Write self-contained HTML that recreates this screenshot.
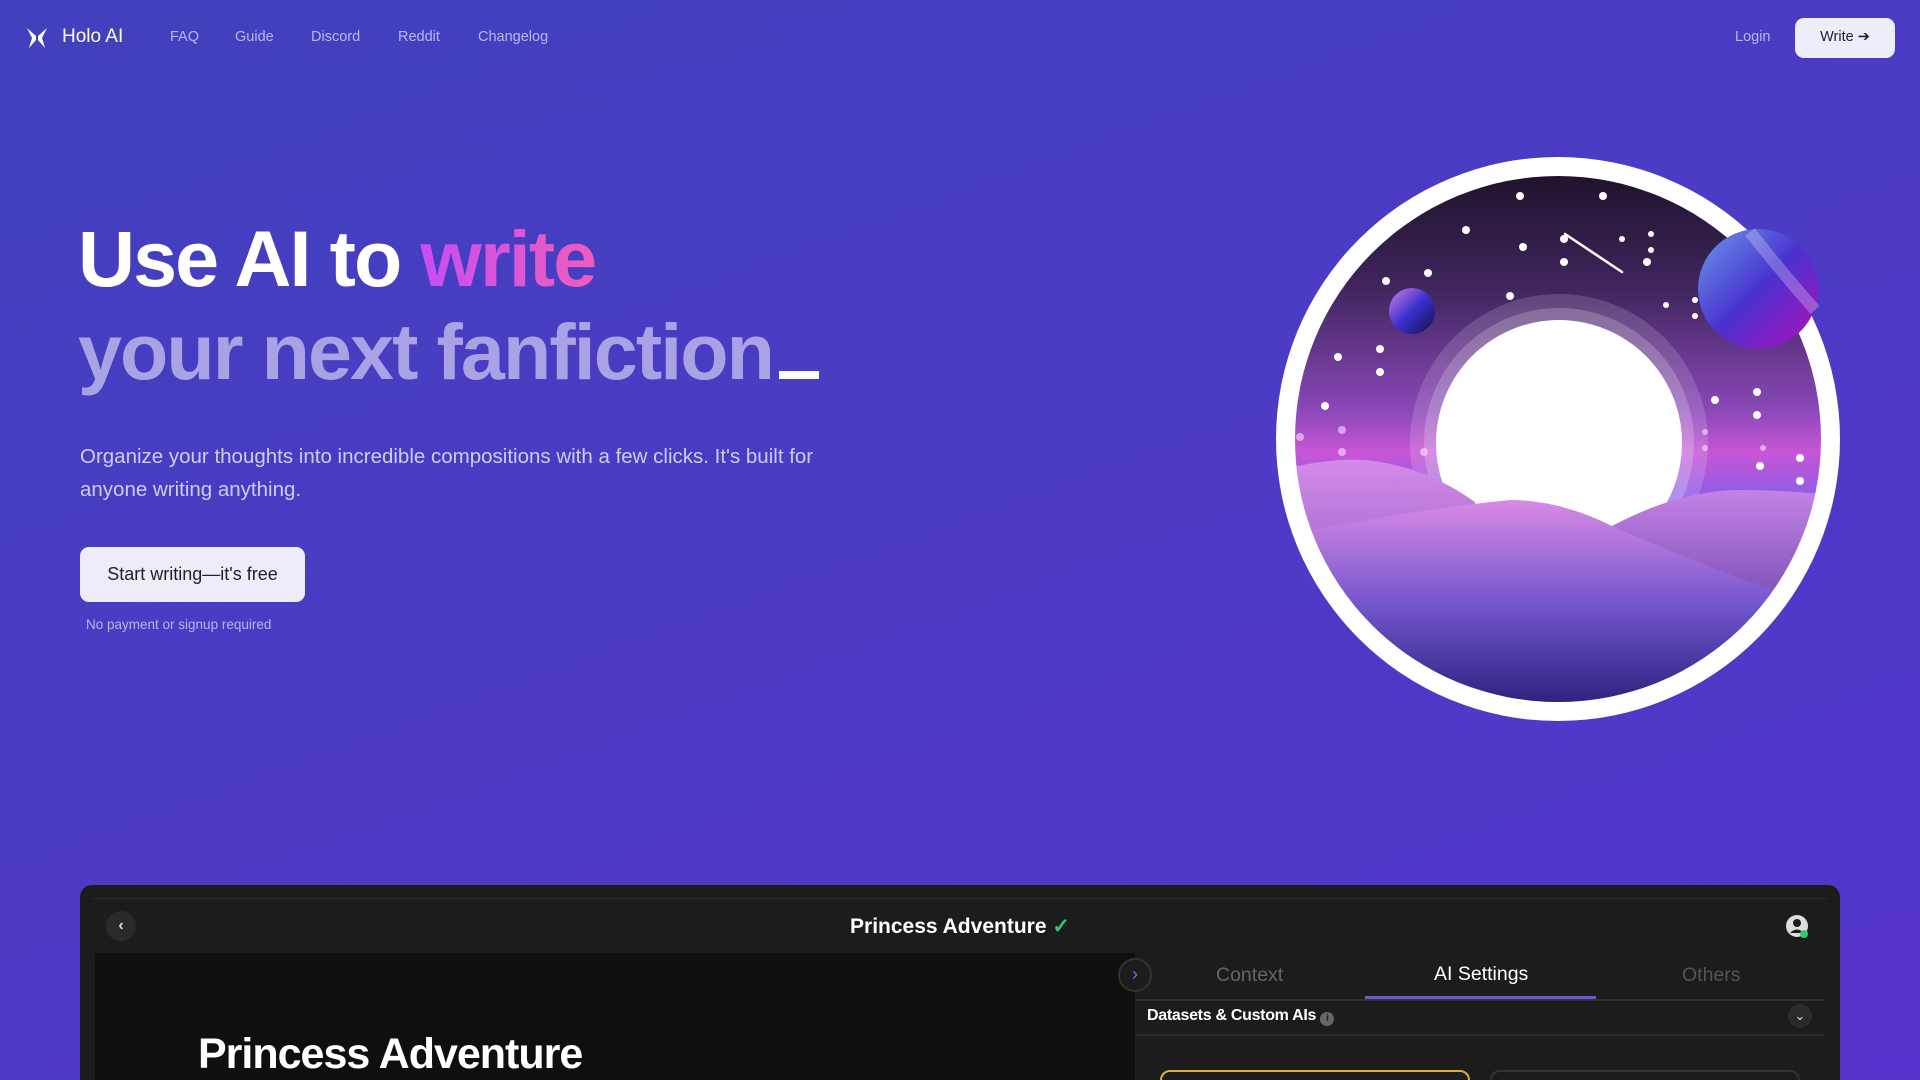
<!DOCTYPE html>
<html style="overflow:hidden;width:1920px;height:1080px"><head><meta charset="utf-8">
<style>
*{margin:0;padding:0;box-sizing:border-box}
body{width:1920px;height:1080px;overflow:hidden;font-family:"Liberation Sans",sans-serif;
background:linear-gradient(160deg,#4240bd 0%,#4a3cc4 45%,#5633cc 100%);position:relative}
.abs{position:absolute}
.nav a{position:absolute;top:29px;font-size:14.5px;color:#b9b8f2;text-decoration:none}
h1{position:absolute;left:78px;top:212px;font-size:79px;line-height:93px;font-weight:700;letter-spacing:-1.9px;color:#fff}
.grad{background:linear-gradient(90deg,#c64ef2,#ef5cbc);-webkit-background-clip:text;background-clip:text;color:transparent}
.l2{color:#a9a3e6}
</style></head><body>
<svg class="abs" style="left:25px;top:26px" width="24" height="24" viewBox="0 0 24 24"><path d="M2 2 L11 10 L11 14 L4 22 L7 12 Z M22 2 L13 10 L13 14 L20 22 L17 12 Z" fill="#fff"/></svg>
<div class="abs" style="left:62px;top:26px;font-size:19px;color:#fff">Holo AI</div>
<div class="nav"><a style="left:170px">FAQ</a><a style="left:235px">Guide</a><a style="left:311px">Discord</a><a style="left:398px">Reddit</a><a style="left:478px">Changelog</a><a style="left:1735px">Login</a></div>
<div class="abs" style="left:1795px;top:18px;width:100px;height:40px;border-radius:9px;background:#eceefb;color:#222;font-size:14.5px;text-align:center;line-height:38px">Write ➔</div>

<h1>Use AI to <span class="grad">write</span><br><span class="l2">your next fanfiction</span><span style="display:inline-block;width:40px;height:8px;background:#fff;margin-left:6px;vertical-align:baseline"></span></h1>
<div class="abs" style="left:80px;top:440px;width:800px;font-size:20.5px;line-height:33px;color:#cfcdf2">Organize your thoughts into incredible compositions with a few clicks. It's built for anyone writing anything.</div>
<div class="abs" style="left:80px;top:547px;width:225px;height:55px;border-radius:9px;background:#eeecf8;color:#222;font-size:18px;text-align:center;line-height:55px">Start writing—it's free</div>
<div class="abs" style="left:86px;top:617px;font-size:13.5px;color:#b9b6e6">No payment or signup required</div>

<svg class="abs" style="left:1260px;top:140px" width="600" height="600" viewBox="0 0 600 600">
<defs>
<linearGradient id="sky" x1="0" y1="0" x2="0" y2="1">
<stop offset="0" stop-color="#140d1c"/><stop offset=".25" stop-color="#40265e"/><stop offset=".45" stop-color="#8a48b8"/><stop offset=".52" stop-color="#c756d6"/><stop offset=".6" stop-color="#8a5ee8"/><stop offset=".7" stop-color="#68a8f0"/><stop offset="1" stop-color="#60c0f0"/></linearGradient>
<linearGradient id="h1" x1="0" y1="0" x2="0" y2="1"><stop offset="0" stop-color="#d68ae8"/><stop offset="1" stop-color="#4a3aa8"/></linearGradient>
<linearGradient id="h2" x1="0" y1="0" x2="0" y2="1"><stop offset="0" stop-color="#d98ae6"/><stop offset=".45" stop-color="#7054cc"/><stop offset="1" stop-color="#160e60"/></linearGradient>
<linearGradient id="h3" x1="0" y1="0" x2="0" y2="1"><stop offset="0" stop-color="#c582e6"/><stop offset="1" stop-color="#20167a"/></linearGradient>
<linearGradient id="p1" x1="0" y1="0" x2="1" y2="1"><stop offset="0" stop-color="#6a9ae8"/><stop offset=".5" stop-color="#4a32d0"/><stop offset="1" stop-color="#b010b8"/></linearGradient>
<linearGradient id="p2" x1="0" y1="0" x2="1" y2="1"><stop offset="0" stop-color="#d080e0"/><stop offset=".5" stop-color="#3a30d0"/><stop offset="1" stop-color="#141040"/></linearGradient>
<clipPath id="c"><circle cx="298" cy="299" r="263"/></clipPath>
</defs>
<circle cx="298" cy="299" r="282" fill="#fff"/>
<g clip-path="url(#c)">
<rect width="600" height="600" fill="url(#sky)"/>
<g fill="#fff">
<circle cx="260" cy="56" r="4"/><circle cx="343" cy="56" r="4"/><circle cx="206" cy="90" r="4"/><circle cx="263" cy="107" r="4"/><circle cx="304" cy="99" r="4"/><circle cx="304" cy="122" r="4"/><circle cx="362" cy="99" r="3"/><circle cx="391" cy="94" r="3"/><circle cx="391" cy="110" r="3"/><circle cx="387" cy="122" r="4"/><circle cx="126" cy="141" r="4"/><circle cx="168" cy="133" r="4"/><circle cx="250" cy="156" r="4"/><circle cx="406" cy="165" r="3"/><circle cx="435" cy="160" r="3"/><circle cx="435" cy="176" r="3"/><circle cx="78" cy="217" r="4"/><circle cx="120" cy="209" r="4"/><circle cx="120" cy="232" r="4"/><circle cx="65" cy="266" r="4"/><circle cx="455" cy="260" r="4"/><circle cx="497" cy="252" r="4"/><circle cx="497" cy="275" r="4"/><circle cx="540" cy="318" r="4"/><circle cx="500" cy="326" r="4"/><circle cx="540" cy="341" r="4"/>
<g opacity=".5"><circle cx="82" cy="290" r="4"/><circle cx="82" cy="312" r="4"/><circle cx="40" cy="297" r="4"/><circle cx="164" cy="312" r="4"/><circle cx="445" cy="292" r="3"/><circle cx="445" cy="308" r="3"/><circle cx="503" cy="308" r="3"/></g>
</g>
<line x1="305" y1="94" x2="362" y2="132" stroke="#fff" stroke-width="2.5" stroke-linecap="round"/>
<circle cx="299" cy="303" r="149" fill="#fff" opacity=".15"/>
<circle cx="299" cy="303" r="135" fill="#fff" opacity=".2"/>
<circle cx="299" cy="303" r="123" fill="#fff"/>
<path d="M20 330 Q80 315 120 322 Q170 330 215 362 L215 600 L20 600 Z" fill="url(#h1)"/>
<path d="M352 386 Q420 350 480 350 Q530 350 580 356 L580 600 L352 600 Z" fill="url(#h3)"/>
<path d="M30 395 Q150 370 250 360 Q300 360 352 386 Q440 425 540 460 L540 600 L30 600 Z" fill="url(#h2)"/>
</g>
<circle cx="152" cy="171" r="23" fill="url(#p2)"/>
<circle cx="498" cy="149" r="60" fill="url(#p1)"/>
<path d="M490 92 Q520 130 555 170" stroke="#fff" stroke-opacity=".25" stroke-width="12" fill="none"/>
</svg>

<div class="abs" style="left:80px;top:885px;width:1760px;height:195px;background:#1c1c1c;border-radius:12px 12px 0 0"></div>
<div class="abs" style="left:92px;top:898px;width:1736px;height:1px;background:#2a2a2a"></div>
<div class="abs" style="left:106px;top:911px;width:30px;height:30px;border-radius:50%;background:#2a2a2a;color:#ddd;text-align:center;line-height:29px;font-size:16px;font-weight:700">‹</div>
<div class="abs" style="left:0;width:1920px;top:914px;text-align:center;font-size:21px;font-weight:700;color:#fff">Princess Adventure <span style="color:#2ecc71">✓</span></div>
<svg class="abs" style="left:1785px;top:914px" width="24" height="24" viewBox="0 0 24 24"><circle cx="12" cy="12" r="11" fill="#ddd"/><circle cx="12" cy="9" r="4" fill="#1c1c1c"/><path d="M5 19 Q12 12 19 19" fill="#1c1c1c"/><circle cx="19" cy="20" r="4" fill="#2ecc71"/></svg>
<div class="abs" style="left:95px;top:953px;width:1040px;height:127px;background:#0f0f0f"></div>
<div class="abs" style="left:198px;top:1030px;font-size:43px;font-weight:700;color:#fff;letter-spacing:-1px">Princess Adventure</div>
<div class="abs" style="left:1135px;top:953px;width:690px;height:127px;background:#1c1c1c"></div>
<div class="abs" style="left:1118px;top:958px;width:34px;height:34px;border-radius:50%;background:#1c1c1c;border:2px solid #333;color:#7b6cf0;text-align:center;line-height:29px;font-size:18px">›</div>
<div class="abs" style="left:1216px;top:964px;font-size:19.5px;color:#666">Context</div>
<div class="abs" style="left:1434px;top:963px;font-size:19.5px;color:#fff">AI Settings</div>
<div class="abs" style="left:1682px;top:964px;font-size:19.5px;color:#555">Others</div>
<div class="abs" style="left:1135px;top:999px;width:690px;height:2px;background:#333"></div>
<div class="abs" style="left:1365px;top:996px;width:231px;height:3px;background:#6a5ad8"></div>
<div class="abs" style="left:1147px;top:1007px;font-size:16px;font-weight:700;color:#fff;letter-spacing:-.3px">Datasets &amp; Custom AIs <span style="display:inline-block;width:14px;height:14px;border-radius:50%;background:#666;color:#222;font-size:10px;text-align:center;line-height:14px;vertical-align:-1px">i</span></div>
<div class="abs" style="left:1788px;top:1004px;width:24px;height:24px;border-radius:50%;background:#2a2a2a;color:#ddd;text-align:center;line-height:24px;font-size:13px">⌄</div>
<div class="abs" style="left:1135px;top:1034px;width:690px;height:2px;background:#2c2c2c"></div>
<div class="abs" style="left:1160px;top:1070px;width:310px;height:40px;border:2px solid #d8b040;border-radius:10px"></div>
<div class="abs" style="left:1490px;top:1070px;width:310px;height:40px;border:2px solid #333;border-radius:10px"></div>
</body></html>
